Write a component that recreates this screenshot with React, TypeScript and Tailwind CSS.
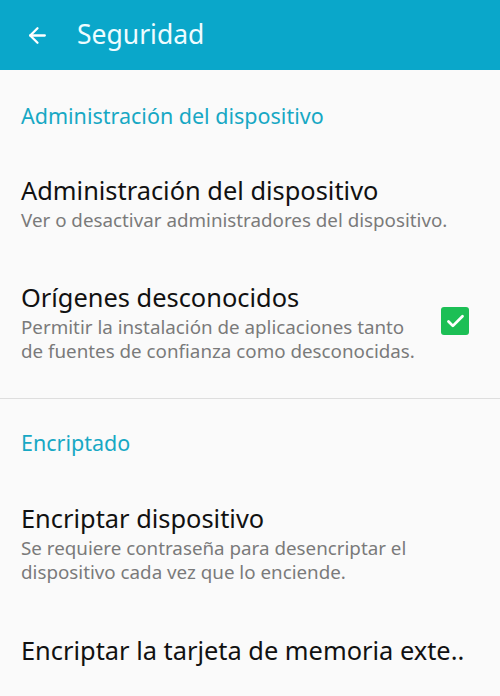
import { ArrowLeft, Check } from "lucide-react";

interface ItemProps {
  title: string;
  lines?: string[];
  checked?: boolean;
  box: string;
}

const SettingRow = ({ title, lines, checked, box }: ItemProps) => {
  return (
    <div className={`flex items-center px-[21px] ${box}`}>
      <div className="flex-1">
        <div className="text-[25.4px] leading-[35px] text-[#111111]">{title}</div>
        {lines?.map((l) => (
          <div key={l} className="text-[18.8px] leading-[24px] text-[#7a7a7a]">
            {l}
          </div>
        ))}
      </div>
      {checked && (
        <div className="ml-2 mr-[10px] flex h-[28px] w-[28px] items-center justify-center rounded-[3px] bg-[#1cbf55]">
          <Check className="h-[21px] w-[21px] text-white" strokeWidth={3.2} />
        </div>
      )}
    </div>
  );
};

const SectionHeader = ({ label, box }: { label: string; box: string }) => (
  <div className={`flex items-center px-[21px] ${box}`}>
    <span className="text-[21.5px] text-[#17a8c4]">{label}</span>
  </div>
);

export default function App() {
  return (
    <div
      className="h-[696px] w-[500px] overflow-hidden bg-[#fafafa]"
      style={{ fontFamily: '"Noto Sans", "Open Sans", sans-serif' }}
    >
      <div className="flex h-[70px] items-center bg-[#0aa7ca] pl-[25px]">
        <ArrowLeft className="h-[25px] w-[25px] text-white" strokeWidth={2.2} />
        <span className="ml-[27px] text-[26.5px] text-[#eefcff]">Seguridad</span>
      </div>

      <SectionHeader label="Administración del dispositivo" box="h-[86px] pt-[6px]" />
      <SettingRow
        title="Administración del dispositivo"
        lines={["Ver o desactivar administradores del dispositivo."]}
        box="h-[92px]"
      />
      <SettingRow
        title="Orígenes desconocidos"
        lines={["Permitir la instalación de aplicaciones tanto", "de fuentes de confianza como desconocidas."]}
        checked
        box="h-[150px] pb-[4px]"
      />
      <div className="h-px bg-[#dedede]" />

      <SectionHeader label="Encriptado" box="h-[84px] pt-[4px]" />
      <SettingRow
        title="Encriptar dispositivo"
        lines={["Se requiere contraseña para desencriptar el", "dispositivo cada vez que lo enciende."]}
        box="h-[119px]"
      />
      <SettingRow title="Encriptar la tarjeta de memoria exte.." box="h-[97px]" />
    </div>
  );
}
